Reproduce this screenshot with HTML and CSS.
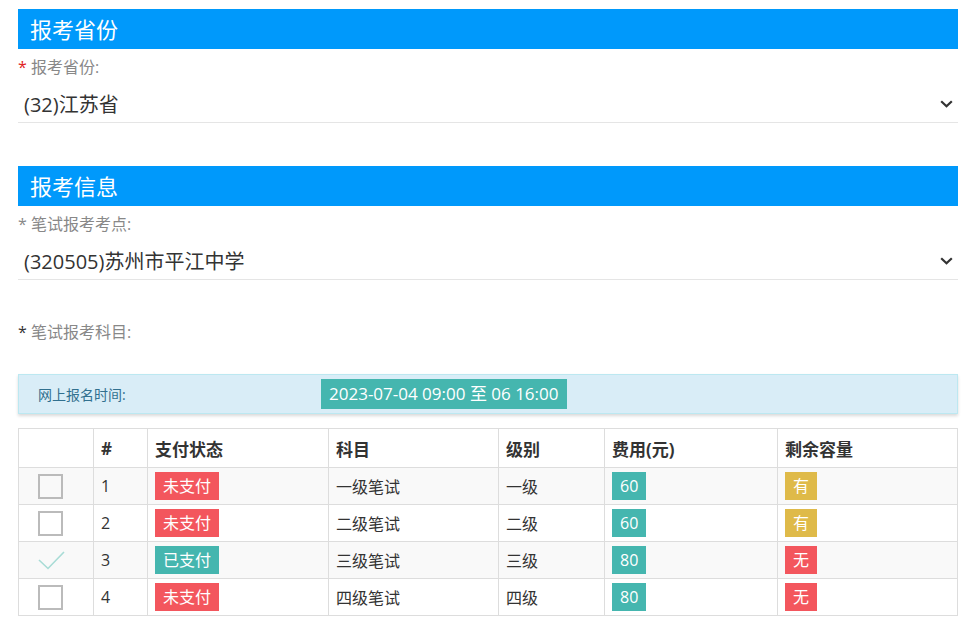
FILE: index.html
```html
<!DOCTYPE html>
<html lang="zh">
<head>
<meta charset="utf-8">
<link rel="stylesheet" href="styles.css">
</head>
<body>
<div class="page">
  <section class="section">
    <h2 class="section-title">报考省份</h2>
    <div class="field">
      <label class="field-label"><span class="req">*</span> 报考省份:</label>
      <div class="select">
        <span class="select-value">(32)江苏省</span>
        <svg class="chevron" width="13" height="8" viewBox="0 0 13 8"><path d="M1.2 1.2 L6.5 6.3 L11.8 1.2" fill="none" stroke="#333" stroke-width="2.2"/></svg>
      </div>
    </div>
  </section>

  <section class="section second">
    <h2 class="section-title">报考信息</h2>
    <div class="field">
      <label class="field-label"><span class="req grey">*</span> 笔试报考考点:</label>
      <div class="select">
        <span class="select-value">(320505)苏州市平江中学</span>
        <svg class="chevron" width="13" height="8" viewBox="0 0 13 8"><path d="M1.2 1.2 L6.5 6.3 L11.8 1.2" fill="none" stroke="#333" stroke-width="2.2"/></svg>
      </div>
    </div>
    <div class="field subjects">
      <label class="field-label"><span class="req dark">*</span> 笔试报考科目:</label>
    </div>

    <div class="alert">
      <span class="alert-label">网上报名时间:</span>
      <span class="alert-time">2023-07-04 09:00 至 06 16:00</span>
    </div>

    <table class="grid">
      <thead>
        <tr>
          <th class="c-check"></th>
          <th class="c-num">#</th>
          <th class="c-pay">支付状态</th>
          <th class="c-subj">科目</th>
          <th class="c-level">级别</th>
          <th class="c-fee">费用(元)</th>
          <th class="c-cap">剩余容量</th>
        </tr>
      </thead>
      <tbody>
        <tr>
          <td class="c-check"><span class="checkbox"></span></td>
          <td>1</td>
          <td><span class="badge red">未支付</span></td>
          <td>一级笔试</td>
          <td>一级</td>
          <td><span class="badge teal">60</span></td>
          <td><span class="badge yellow">有</span></td>
        </tr>
        <tr>
          <td class="c-check"><span class="checkbox"></span></td>
          <td>2</td>
          <td><span class="badge red">未支付</span></td>
          <td>二级笔试</td>
          <td>二级</td>
          <td><span class="badge teal">60</span></td>
          <td><span class="badge yellow">有</span></td>
        </tr>
        <tr>
          <td class="c-check"><svg class="check" width="28" height="20" viewBox="0 0 28 20"><path d="M1 10 L10 18.5 L26 2" fill="none" stroke="#a8dcd6" stroke-width="1.6"/></svg></td>
          <td>3</td>
          <td><span class="badge teal">已支付</span></td>
          <td>三级笔试</td>
          <td>三级</td>
          <td><span class="badge teal">80</span></td>
          <td><span class="badge red">无</span></td>
        </tr>
        <tr>
          <td class="c-check"><span class="checkbox"></span></td>
          <td>4</td>
          <td><span class="badge red">未支付</span></td>
          <td>四级笔试</td>
          <td>四级</td>
          <td><span class="badge teal">80</span></td>
          <td><span class="badge red">无</span></td>
        </tr>
      </tbody>
    </table>
  </section>
</div>
</body>
</html>
```

FILE: styles.css
```css
* { box-sizing: border-box; }
html, body { margin: 0; padding: 0; background: #fff; }
body {
  font-family: "Open Sans", "Noto Sans CJK SC", sans-serif;
  color: #333;
}
.page {
  width: 940px;
  margin-left: 18px;
  padding-top: 9px;
}
.section-title {
  margin: 0;
  height: 40px;
  line-height: 40px;
  background: #0099fb;
  color: #fff;
  font-size: 22px;
  font-weight: normal;
  padding-left: 12px;
}
.second { margin-top: 43px; }
.field { margin-top: 7px; }
.field-label {
  display: block;
  font-size: 16px;
  line-height: 22px;
  color: #888;
}
.req { color: #e02222; }
.req.grey { color: #888; }
.req.dark { color: #333; }
.select {
  margin-top: 7px;
  height: 38px;
  border-bottom: 1px solid #e5e5e5;
  display: flex;
  align-items: center;
  justify-content: space-between;
  padding: 0 4px 0 6px;
}
.select-value { font-size: 20px; color: #333; }
.chevron { margin-right: 1px; }
.subjects { margin-top: 41px; }
.alert {
  margin-top: 31px;
  height: 40px;
  background: #d9edf7;
  border: 1px solid #bce8f1;
  box-shadow: 0 2px 3px rgba(0,0,0,0.15);
  display: flex;
  align-items: center;
  padding-left: 19px;
}
.alert-label {
  font-size: 14px;
  color: #31708f;
  width: 283px;
}
.alert-time {
  background: #45b6af;
  color: #fff;
  font-size: 17px;
  height: 30px;
  line-height: 30px;
  padding: 0 8px;
}
.grid {
  margin-top: 14px;
  width: 940px;
  border-collapse: collapse;
  font-size: 16px;
}
.grid th, .grid td {
  border: 1px solid #ddd;
  text-align: left;
  padding: 0 7px;
  height: 37px;
}
.grid th { font-weight: bold; font-size: 17px; height: 39px; color: #333; }
.grid tbody tr:nth-child(odd) { background: #f9f9f9; }
.grid .c-check { width: 75px; padding-left: 19px; }
.c-num { width: 54px; }
.c-pay { width: 181px; }
.c-subj { width: 170px; }
.c-level { width: 106px; }
.c-fee { width: 173px; }
.checkbox {
  display: inline-block;
  width: 25px;
  height: 25px;
  border: 2px solid #bbb;
  vertical-align: middle;
}
.check { vertical-align: middle; display: block; }
.badge {
  display: inline-block;
  color: #fff;
  font-size: 16px;
  line-height: 28px;
  height: 28px;
  padding: 0 8px;
  vertical-align: middle;
}
.badge.red { background: #f3565d; }
.badge.teal { background: #45b6af; }
.badge.yellow { background: #dfba49; }
```
